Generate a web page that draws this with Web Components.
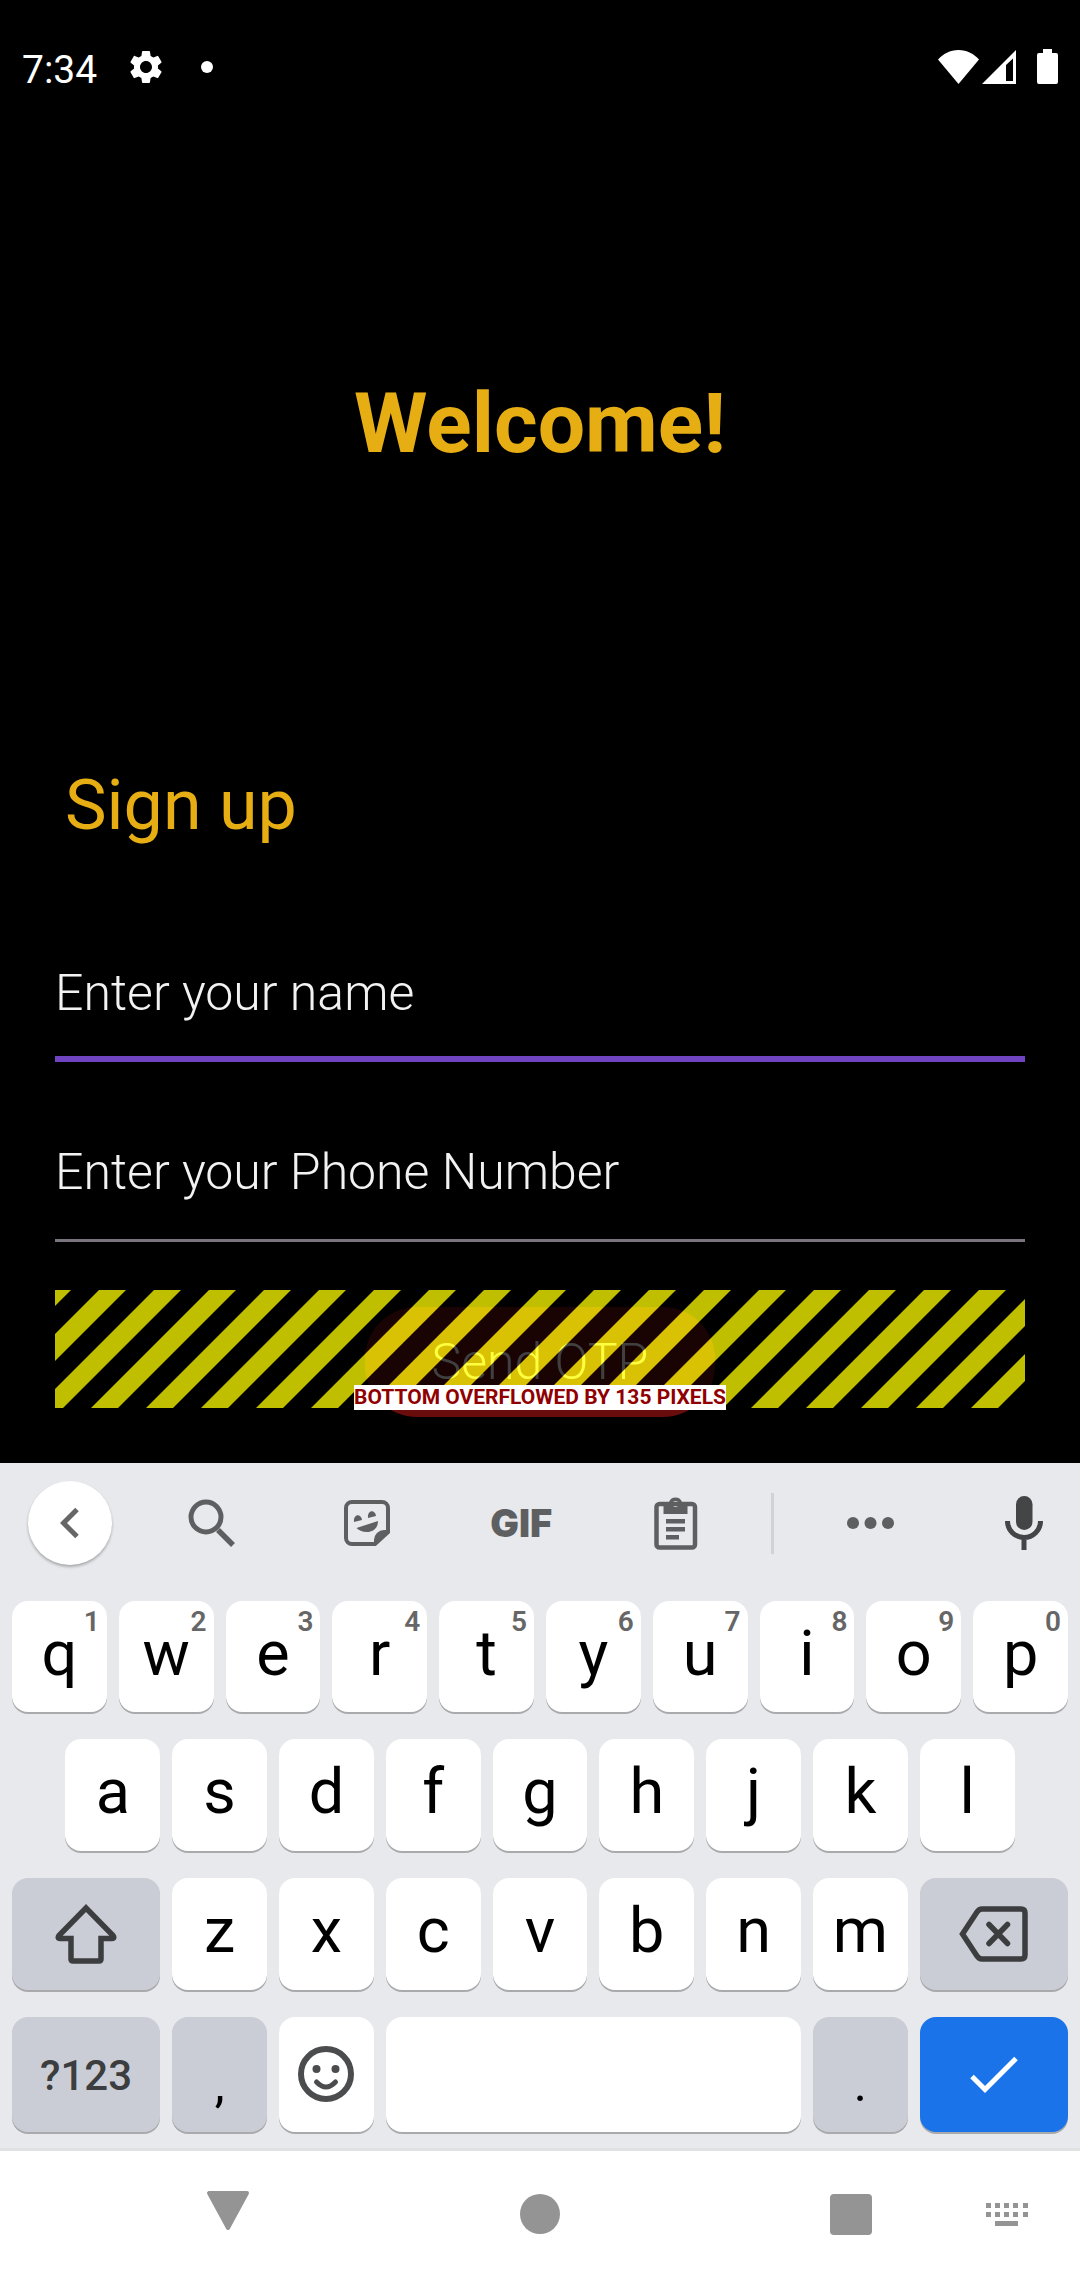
<!DOCTYPE html>
<html lang="en">
<head>
<meta charset="utf-8">
<meta name="viewport" content="width=device-width, initial-scale=1">
<title>Sign up</title>
<style>
  html, body { margin: 0; background: #000; }
  body { font-family: Roboto, "Noto Sans", sans-serif; }
</style>
</head>
<body>
<phone-screen>
  <status-bar slot="status" time="7:34"></status-bar>
  <signup-form></signup-form>
  <soft-keyboard slot="keyboard"></soft-keyboard>
  <nav-bar slot="nav"></nav-bar>
</phone-screen>

<script>
const define = (name, html, setup) => customElements.define(name, class extends HTMLElement {
  connectedCallback() {
    if (this.shadowRoot) return;
    const root = this.attachShadow({ mode: 'open' });
    root.innerHTML = typeof html === 'function' ? html(this) : html;
    if (setup) setup(root, this);
  }
});

/* name: [width, height, shapes] */
const ICONS = {
  gear: [40, 40, '<g transform="scale(1.6667)"><path fill="currentColor" d="M19.14 12.94c.04-.3.06-.61.06-.94 0-.32-.02-.64-.07-.94l2.03-1.58a.49.49 0 0 0 .12-.61l-1.92-3.32a.488.488 0 0 0-.59-.22l-2.39.96c-.5-.38-1.03-.7-1.62-.94l-.36-2.54a.484.484 0 0 0-.48-.41h-3.84c-.24 0-.43.17-.47.41l-.36 2.54c-.59.24-1.13.57-1.62.94l-2.39-.96c-.22-.08-.47 0-.59.22L2.74 8.87c-.12.21-.08.47.12.61l2.03 1.58c-.05.3-.09.63-.09.94s.02.64.07.94l-2.03 1.58a.49.49 0 0 0-.12.61l1.92 3.32c.12.22.37.29.59.22l2.39-.96c.5.38 1.03.7 1.62.94l.36 2.54c.05.24.24.41.48.41h3.84c.24 0 .44-.17.47-.41l.36-2.54c.59-.24 1.13-.56 1.62-.94l2.39.96c.22.08.47 0 .59-.22l1.92-3.32c.12-.22.07-.47-.12-.61l-2.01-1.58zM12 15.6c-1.98 0-3.6-1.62-3.6-3.6s1.62-3.6 3.6-3.6 3.6 1.62 3.6 3.6-1.62 3.6-3.6 3.6z"/></g>'],
  dot: [12, 12, '<circle cx="6" cy="6" r="6" fill="currentColor"/>'],
  wifi: [41, 34, '<path fill="currentColor" d="M20.5 34L0 9.5C5 4 12 0 20.5 0S36 4 41 9.5z"/>'],
  signal: [35, 34, '<path fill="currentColor" fill-rule="evenodd" d="M0 34L34 0V34zM24 31H31V8.500L24 15z"/>'],
  battery: [21, 36, '<path fill="currentColor" d="M6 0h9v4h4a2 2 0 0 1 2 2v27a2 2 0 0 1-2 2H2a2 2 0 0 1-2-2V6a2 2 0 0 1 2-2h4z"/>'],
  back: [20, 32, '<path d="M17 2.500L3.500 16L17 29.500" fill="none" stroke="currentColor" stroke-width="5"/>'],
  search: [48, 48, '<g fill="none" stroke="currentColor"><circle cx="18" cy="18" r="15" stroke-width="5"/><path d="M30 31L45 46" stroke-width="5.500"/></g>'],
  sticker: [46, 46, '<path d="M8 2H38a6 6 0 0 1 6 6V32L31 44H8a6 6 0 0 1-6-6V8a6 6 0 0 1 6-6z" fill="none" stroke="currentColor" stroke-width="4"/><g fill="currentColor"><path d="M45 30H40a10 10 0 0 0-10 10V45z"/><path d="M10 22c-1-8 7-9 8-2z"/><path d="M24 18c-1-8 7-9 8-2z"/><path d="M12.500 28L34 21C34 29 28 32 23 32C18 32 14.500 30 12.500 28z"/></g>'],
  clipboard: [44, 54, '<rect x="2.500" y="8" width="38.500" height="43.500" rx="3" fill="none" stroke="currentColor" stroke-width="4.500"/><path fill="currentColor" fill-rule="evenodd" d="M9.500 6H15a7 7 0 0 1 13 0H33.500V18H9.500zM18.500 8a3 3 0 1 0 6 0a3 3 0 1 0-6 0z"/><path fill="currentColor" d="M12 23h19v4.500H12zM12 31h19v4.500H12zM12 39h13v4.500H12z"/>'],
  more: [48, 12, '<g fill="currentColor"><circle cx="6" cy="6" r="6"/><circle cx="23.500" cy="6" r="6"/><circle cx="41" cy="6" r="6"/></g>'],
  mic: [38, 54, '<rect x="11" y="0" width="16.500" height="34" rx="8.200" fill="currentColor"/><path d="M2.500 25a16.500 16.500 0 0 0 33 0M19 42V54" fill="none" stroke="currentColor" stroke-width="5"/>'],
  shift: [62, 60, '<path d="M31 4L58 31.500q2 3-1 3H46V55q0 2-2 2H18q-2 0-2-2V34.500H5q-3 0-1-3z" fill="none" stroke="currentColor" stroke-width="5.500"/>'],
  erase: [70, 56, '<g fill="none" stroke="currentColor" stroke-width="5.500"><path d="M3.500 28L18 6q2-3 5-3H62q4 0 4 4V49q0 4-4 4H23q-3 0-5-3z"/><path d="M30 18.500L48.500 37.500M48.500 18.500L30 37.500" stroke-linecap="round"/></g>'],
  emoji: [56, 56, '<circle cx="28" cy="28" r="25" fill="none" stroke="currentColor" stroke-width="6"/><g fill="currentColor"><circle cx="18.500" cy="23" r="4"/><circle cx="37.500" cy="23" r="4"/></g><path d="M18.500 36q9.500 10 19 0" fill="none" stroke="currentColor" stroke-width="5" stroke-linecap="round"/>'],
  check: [48, 38, '<path d="M2 20.500L15 33.500L46 2.500" fill="none" stroke="currentColor" stroke-width="5"/>'],
  navBack: [44, 48, '<path d="M3 2H41L22 37z" fill="currentColor" stroke="currentColor" stroke-width="4" stroke-linejoin="round"/>'],
  navHome: [40, 42, '<circle cx="20" cy="20" r="20" fill="currentColor"/>'],
  navRecent: [42, 42, '<rect width="42" height="41" rx="4" fill="currentColor"/>'],
  navKeys: [42, 26, '<path fill="currentColor" d="M0 1h5v5H0zM9 1h5v5H9zM18 1h5v5h-5zM27 1h5v5h-5zM37 1h5v5h-5zM0 10h5v5H0zM9 10h5v5H9zM18 10h5v5h-5zM27 10h5v5h-5zM37 10h5v5h-5zM9 19h23v5H9z"/>']
};

define('ui-icon', el => {
  const [w, h, shapes] = ICONS[el.getAttribute('name')];
  return `<style>:host{display:block;flex:none}svg{display:block}</style>
    <svg width="${w}" height="${h}" viewBox="0 0 ${w} ${h}" aria-hidden="true">${shapes}</svg>`;
});

define('phone-screen', `
  <style>
    :host { display: flex; flex-direction: column; min-height: 100vh; background: #000; }
    main { flex: 1; }
  </style>
  <slot name="status"></slot>
  <main><slot></slot></main>
  <slot name="keyboard"></slot>
  <slot name="nav"></slot>`);

define('status-bar', el => `
  <style>
    :host { display: flex; align-items: center; justify-content: space-between;
      box-sizing: border-box; height: 134px; padding: 0 22px; color: #fff; }
    div { display: flex; align-items: center; }
    time { font-size: 39px; line-height: 46px; padding-top: 5px; margin-right: 29px; }
    .dot { margin-left: 35px; }
    .signal { margin: 0 20px 0 3px; }
  </style>
  <div><time>${el.getAttribute('time')}</time><ui-icon name="gear"></ui-icon><ui-icon class="dot" name="dot"></ui-icon></div>
  <div><ui-icon name="wifi"></ui-icon><ui-icon class="signal" name="signal"></ui-icon><ui-icon name="battery"></ui-icon></div>`);

define('line-field', el => `
  <style>
    :host { display: block; }
    input { display: block; box-sizing: border-box; width: 100%; margin: 0; border: 0;
      border-bottom: 3px solid #79747e; border-radius: 0; outline: 0; padding: 0 0 37px;
      background: none; color: #f2f2f2; font: 300 50px/60px Roboto, sans-serif; height: 100px; }
    input::placeholder { color: #f2f2f2; opacity: 1; }
    :host([active]) input { border-bottom: 6px solid #7044c0; padding-bottom: 33px; height: 99px; }
  </style>
  <input type="${el.getAttribute('type')}" placeholder="${el.getAttribute('label')}" aria-label="${el.getAttribute('label')}">`);

define('overflow-banner', `
  <style>
    :host { display: flex; justify-content: center; position: relative; }
    .banner { position: absolute; inset: -17px 0 9px; pointer-events: none;
      display: flex; align-items: flex-end; justify-content: center; }
    svg { position: absolute; inset: 0; width: 100%; height: 100%; }
    span { position: relative; margin-bottom: -2px; background: #fff; color: #900000;
      font-size: 21px; line-height: 25px; font-weight: 700; white-space: nowrap; }
  </style>
  <slot></slot>
  <div class="banner">
    <svg aria-hidden="true" shape-rendering="crispEdges">
      <defs><pattern id="hazard" width="55" height="220" patternUnits="userSpaceOnUse" patternTransform="skewX(-45)">
        <rect width="55" height="220" fill="#000"/>
        <rect width="16" height="220" fill="#ff0"/><rect x="44" width="11" height="220" fill="#ff0"/>
      </pattern></defs>
      <rect width="100%" height="100%" fill="url(#hazard)" opacity="0.75"/>
    </svg>
    <span>BOTTOM OVERFLOWED BY 135 PIXELS</span>
  </div>`);

define('signup-form', `
  <style>
    :host { display: block; padding: 241px 55px 46px; }
    h1, h2 { margin: 0; color: #e6ae12; }
    h1 { font-size: 84px; line-height: 98px; font-weight: 700; text-align: center; }
    h2 { font-size: 70px; line-height: 80px; font-weight: 400; margin: 292px 10px 118px; }
    form { display: flex; flex-direction: column; }
    line-field + line-field { margin-top: 80px; }
    overflow-banner { margin-top: 65px; }
    button { width: 350px; height: 110px; border: 0; border-radius: 52px; padding: 0;
      background: #680c0c; color: #fff; font: 300 50px/60px Roboto, sans-serif; }
  </style>
  <h1>Welcome!</h1>
  <h2>Sign up</h2>
  <form>
    <line-field type="text" label="Enter your name" active></line-field>
    <line-field type="tel" label="Enter your Phone Number"></line-field>
    <overflow-banner><button type="button">Send OTP</button></overflow-banner>
  </form>`);

define('key-cap', el => `
  <style>
    :host { display: block; grid-column: span 2; }
    :host([wide]) { grid-column: span 3; }
    :host([space]) { grid-column: span 8; }
    :host([indent]) { grid-column: 2 / span 2; }
    button { position: relative; box-sizing: border-box; display: flex; align-items: center; justify-content: center;
      width: 100%; height: 100%; border: 0; border-radius: 16px; padding: 0 0 6px;
      background: #fff; color: #000; box-shadow: 0 2px 0 #a9aaac; font: 400 63px/74px Roboto, sans-serif; }
    :host([tone=grey]) button { background: #cbcdd6; color: #3c3d3f; }
    :host([tone=blue]) button { background: #1a73e8; color: #fff; }
    :host([icon]) button { padding: 0; }
    :host([icon=emoji]) button { color: #4b4c4d; padding-bottom: 2px; }
    :host([mode]) button { font-size: 42px; line-height: 50px; font-weight: 500; padding: 2px 0 0; }
    :host([mark]) button { font-size: 50px; line-height: 60px; color: #000; padding: 18px 0 0; }
    small { position: absolute; top: 4px; right: 7px; font-size: 28px; line-height: 34px; font-weight: 600; color: #666; }
  </style>
  <button type="button" ${el.hasAttribute('name') ? `aria-label="${el.getAttribute('name')}"` : ''}>${
    el.hasAttribute('icon') ? `<ui-icon name="${el.getAttribute('icon')}"></ui-icon>` : '<slot></slot>'
  }${el.hasAttribute('hint') ? `<small>${el.getAttribute('hint')}</small>` : ''}</button>`);

define('keyboard-tools', `
  <style>
    :host { display: flex; align-items: center; height: 120px; color: #5d5f61; }
    button { display: flex; align-items: center; justify-content: center; flex: 1; height: 84px;
      border: 0; padding: 0; background: none; color: inherit; font: 900 38px/44px Inter, sans-serif; }
    .back { flex: none; width: 84px; margin: 0 23px 0 28px; border-radius: 42px; background: #fff;
      box-shadow: 0 2px 3px rgba(0,0,0,.28); color: #666; }
    .group { display: flex; flex: 618; }
    .group + i { flex: none; width: 3px; height: 61px; margin-left: 18px; background: #d0d2d6; }
    .more { flex: 193; }
    .mic { flex: 113; color: #444547; }
  </style>
  <button class="back" aria-label="Back"><ui-icon name="back"></ui-icon></button>
  <div class="group">
    <button aria-label="Search"><ui-icon name="search"></ui-icon></button>
    <button aria-label="Stickers"><ui-icon name="sticker"></ui-icon></button>
    <button>GIF</button>
    <button aria-label="Clipboard"><ui-icon name="clipboard"></ui-icon></button>
  </div><i></i>
  <button class="more" aria-label="More"><ui-icon name="more"></ui-icon></button>
  <button class="mic" aria-label="Voice input"><ui-icon name="mic"></ui-icon></button>`);

const letters = s => [...s].map(c => `<key-cap>${c}</key-cap>`).join('');
define('soft-keyboard', `
  <style>
    :host { display: block; background: #e8e9ed; border-bottom: 3px solid #e0e1e1; }
    .keys { display: grid; grid-template-columns: repeat(20, minmax(0, 1fr));
      grid-template-rows: 111px 112px 112px 115px; gap: 27px 12px; padding: 18px 12px 16px; }
  </style>
  <keyboard-tools></keyboard-tools>
  <div class="keys">
    ${[...'qwertyuiop'].map((c, i) => `<key-cap hint="${(i + 1) % 10}">${c}</key-cap>`).join('')}
    <key-cap indent>a</key-cap>${letters('sdfghjkl')}
    <key-cap wide tone="grey" icon="shift" name="Shift"></key-cap>${letters('zxcvbnm')}
    <key-cap wide tone="grey" icon="erase" name="Backspace"></key-cap>
    <key-cap wide tone="grey" mode>?123</key-cap>
    <key-cap tone="grey" mark>,</key-cap>
    <key-cap icon="emoji" name="Emoji"></key-cap>
    <key-cap space name="Space"></key-cap>
    <key-cap tone="grey" mark>.</key-cap>
    <key-cap wide tone="blue" icon="check" name="Done"></key-cap>
  </div>`);

define('nav-bar', `
  <style>
    :host { display: grid; grid-template-columns: 156fr 144fr 168fr 144fr 167fr 144fr 12fr 144fr 1fr;
      height: 129px; background: #fff; color: #949494; }
    button { display: flex; align-items: center; justify-content: center; border: 0; padding: 0 0 2px; background: none; color: inherit; }
    button:nth-of-type(1) { grid-column: 2; }
    button:nth-of-type(2) { grid-column: 4; }
    button:nth-of-type(3) { grid-column: 6; }
    button:nth-of-type(4) { grid-column: 8; }
  </style>
  <button aria-label="Hide keyboard"><ui-icon name="navBack"></ui-icon></button>
  <button aria-label="Home"><ui-icon name="navHome"></ui-icon></button>
  <button aria-label="Recent apps"><ui-icon name="navRecent"></ui-icon></button>
  <button aria-label="Switch keyboard"><ui-icon name="navKeys"></ui-icon></button>`);
</script>
</body>
</html>
